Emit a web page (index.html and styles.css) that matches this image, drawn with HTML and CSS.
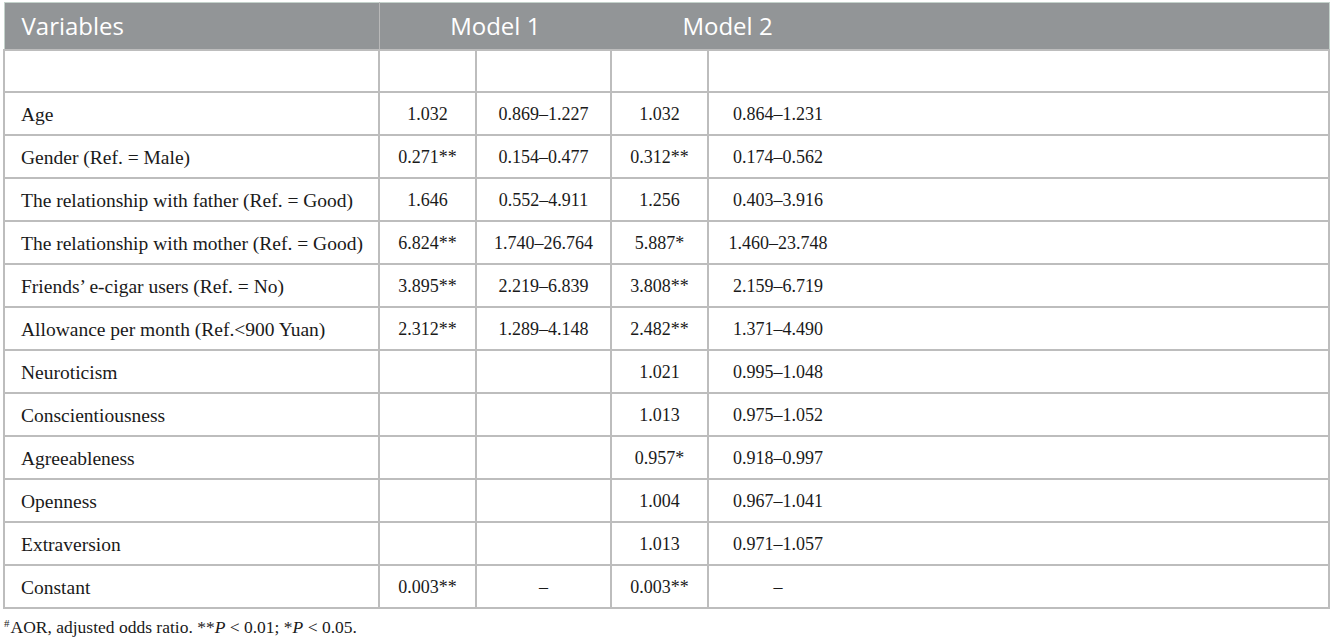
FILE: index.html
```html
<!DOCTYPE html>
<html>
<head>
<meta charset="utf-8">
<link rel="stylesheet" href="styles.css">
</head>
<body>
<div class="wrap">
<table class="tbl">
  <colgroup>
    <col class="c1"><col class="c2"><col class="c3"><col class="c4"><col class="c5">
  </colgroup>
  <thead>
    <tr class="head">
      <th class="h-var">Variables</th>
      <th class="h-model" colspan="2">Model 1</th>
      <th class="h-model2" colspan="2"><div class="m2">Model 2</div></th>
    </tr>
  </thead>
  <tbody>
    <tr><td></td><td></td><td></td><td></td><td></td></tr>
    <tr><td>Age</td><td>1.032</td><td>0.869–1.227</td><td>1.032</td><td><div class="ci">0.864–1.231</div></td></tr>
    <tr><td>Gender (Ref. = Male)</td><td>0.271**</td><td>0.154–0.477</td><td>0.312**</td><td><div class="ci">0.174–0.562</div></td></tr>
    <tr><td>The relationship with father (Ref. = Good)</td><td>1.646</td><td>0.552–4.911</td><td>1.256</td><td><div class="ci">0.403–3.916</div></td></tr>
    <tr><td>The relationship with mother (Ref. = Good)</td><td>6.824**</td><td>1.740–26.764</td><td>5.887*</td><td><div class="ci">1.460–23.748</div></td></tr>
    <tr><td>Friends’ e-cigar users (Ref. = No)</td><td>3.895**</td><td>2.219–6.839</td><td>3.808**</td><td><div class="ci">2.159–6.719</div></td></tr>
    <tr><td>Allowance per month (Ref.&lt;900 Yuan)</td><td>2.312**</td><td>1.289–4.148</td><td>2.482**</td><td><div class="ci">1.371–4.490</div></td></tr>
    <tr><td>Neuroticism</td><td></td><td></td><td>1.021</td><td><div class="ci">0.995–1.048</div></td></tr>
    <tr><td>Conscientiousness</td><td></td><td></td><td>1.013</td><td><div class="ci">0.975–1.052</div></td></tr>
    <tr><td>Agreeableness</td><td></td><td></td><td>0.957*</td><td><div class="ci">0.918–0.997</div></td></tr>
    <tr><td>Openness</td><td></td><td></td><td>1.004</td><td><div class="ci">0.967–1.041</div></td></tr>
    <tr><td>Extraversion</td><td></td><td></td><td>1.013</td><td><div class="ci">0.971–1.057</div></td></tr>
    <tr><td>Constant</td><td>0.003**</td><td>–</td><td>0.003**</td><td><div class="ci">–</div></td></tr>
  </tbody>
</table>
<p class="note"><sup>#</sup>AOR, adjusted odds ratio. **<i>P</i> &lt; 0.01; *<i>P</i> &lt; 0.05.</p>
</div>
</body>
</html>
```
FILE: styles.css
```css
html, body {
  margin: 0;
  padding: 0;
  background: #ffffff;
}
.wrap {
  padding: 2px 0 0 3px;
}
.tbl {
  width: 1327px;
  border-collapse: collapse;
  table-layout: fixed;
  border: 1px solid #c4d2cb;
  font-family: "Liberation Serif", "Times New Roman", serif;
  font-size: 18px;
  color: #1a1a1a;
}
.c1 { width: 375px; }
.c2 { width: 97px; }
.c3 { width: 135px; }
.c4 { width: 97px; }
.c5 { width: auto; }
.head {
  background: #929597;
  height: 47px;
}
.head th {
  color: #ffffff;
  font-family: "Open Sans", "Noto Sans", sans-serif;
  font-weight: 400;
  font-size: 24px;
  padding: 0;
  border: none;
  text-align: center;
}
.head .h-var {
  text-align: left;
  padding-left: 17px;
  border-right: 1px solid #b8b8b8;
}
.m2 {
  width: 233px;
  text-align: center;
}
tbody tr {
  height: 43px;
}
tbody td {
  border: 2px solid #bdbdbd;
  padding: 3px 0 0 0;
  text-align: center;
  vertical-align: middle;
}
tbody td:first-child {
  text-align: left;
  padding-left: 16px;
  font-size: 19.5px;
}
tbody tr:first-child {
  height: 42px;
}
.ci {
  width: 138px;
  text-align: center;
}
.note {
  margin: 8px 0 0 1px;
  font-family: "Liberation Serif", "Times New Roman", serif;
  font-size: 17.5px;
  color: #1a1a1a;
}
.note sup {
  font-size: 11px;
  vertical-align: 6px;
  margin-right: 1px;
}
```
